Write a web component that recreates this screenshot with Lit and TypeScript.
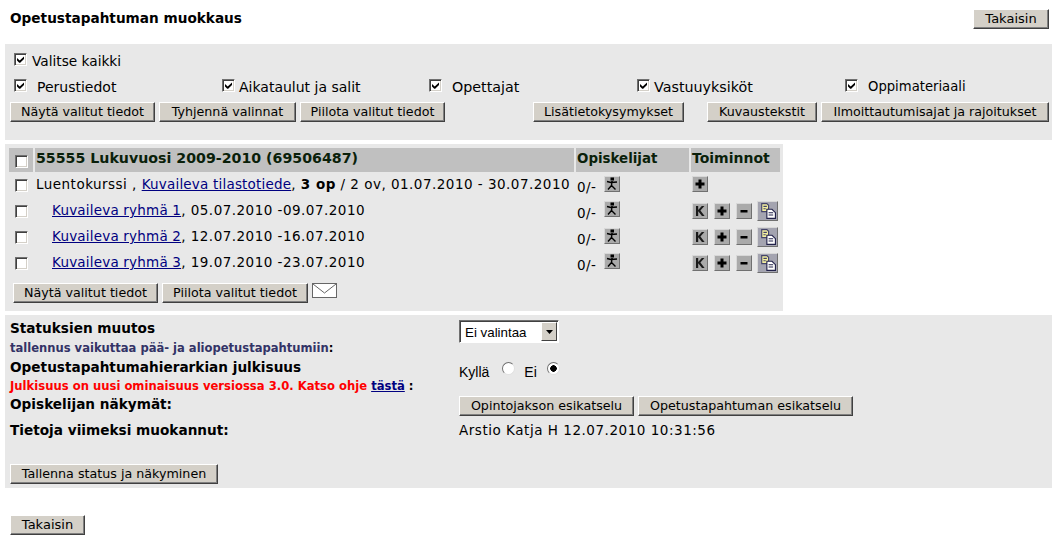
import { LitElement, html, css, svg } from "lit";
import { customElement } from "lit/decorators.js";

const cb = (checked = false) => html`<span class="cb" role="checkbox" aria-checked=${checked ? "true" : "false"}>${checked
  ? html`<svg width="9" height="9" viewBox="0 0 9 9"><path d="M1 3 L1 5.5 L3.2 7.8 L4.2 7.8 L8 4 L8 1.5 L3.7 5.6 Z" fill="#000"/></svg>`
  : ""}</span>`;

const iconBtn = (content: unknown, cls = "") => html`<span class="ib ${cls}"><svg width="14" height="14" viewBox="0 0 14 14">${content}</svg></span>`;
const plus = svg`<path d="M5.5 2.5h3v3h3v3h-3v3h-3v-3h-3v-3h3z" fill="#000"/>`;
const minus = svg`<rect x="3.5" y="6" width="7" height="2.5" fill="#000"/>`;
const k = svg`<path d="M3 2h2.2v4L8.8 2h2.6L7.4 6.6 11.6 12H9L5.2 7.2V12H3z" fill="#1a1a1a"/>`;
const runner = svg`<rect x="5.5" y="0.5" width="3.5" height="3" fill="#000"/><g fill="none" stroke="#000" stroke-width="1.4"><path d="M2 4.5 L6 5.5 L12 5 M7 4 L6.5 8.5 M6.5 8.5 L3 12.5 M6.5 8.5 L10.5 12.5"/></g>`;
const copy = svg`
  <path d="M1.5.5h4.5l1.5 1.5v5.5H1.5z" fill="#f4f0a0" stroke="#44446a" stroke-width="1"/>
  <path d="M3 3h3M3 5h2" stroke="#44446a" stroke-width="1"/>
  <path d="M6 5.5h4.5l3 3v5H6z" fill="#fff" stroke="#22224a" stroke-width="1"/>
  <path d="M7.5 8.5h4M7.5 10.5h4" stroke="#22224a" stroke-width="1"/>`;

@customElement("app-root")
export class AppRoot extends LitElement {
  static styles = css`
    :host { display: block; width: 1057px; height: 541px; overflow: hidden; background: #fff; font: 13.5px/16px "DejaVu Sans", Verdana, sans-serif; color: #000; position: relative; }
    * { box-sizing: border-box; }
    a { color: #000080; text-decoration: underline; }
    .btn { display: inline-flex; align-items: center; justify-content: center; height: 20px; padding: 0 0 1px; background: #d4d0c8; font: 12.7px/16px "DejaVu Sans", Verdana, sans-serif; color: #000; border: 1px solid; border-color: #fff #404040 #404040 #fff; box-shadow: inset -1px -1px 0 #808080; white-space: nowrap; }
    .btn.tk { font-size: 13px; }
    .cb { display: inline-flex; width: 13px; height: 13px; background: #fff; border: 1px solid; border-color: #707070 #fff #fff #707070; box-shadow: inset 1px 1px 0 #404040, inset -1px -1px 0 #d4d0c8; align-items: center; justify-content: center; flex: none; }
    .cb svg { display: block; }
    .top { display: flex; justify-content: space-between; padding: 9px 8px 0 10px; height: 44px; }
    .top .btn { width: 76px; }
    .title { font-weight: bold; font-size: 13.65px; margin-top: 1px; }
    .panel { background: #e8e8e8; margin: 0 5px; }
    .p1 { height: 96px; padding: 9px 3px 0 5px; }
    .all { display: flex; align-items: flex-start; gap: 5px; padding-left: 4px; height: 23px; }
    .all span.t { font-size: 13.7px; }
    .checks { display: grid; grid-template-columns: 208px 207px 208px 208px 1fr; padding-left: 4px; height: 26px; }
    .chk { display: flex; align-items: flex-start; }
    .chk .cb { margin-top: 3px; }
    .chk span.t { margin-top: 3px; font-size: 14px; }
    .chk span.m10 { margin-left: 10px; }
    .chk span.m4 { margin-left: 4px; }
    .chk span.wide { font-size: 14.3px; }
    .chk span.nar { font-size: 13.2px; }
    .bar { display: flex; gap: 4px; }
    .bar .w1 { width: 145px; } .bar .w2 { width: 137px; } .bar .w3 { width: 145px; }
    .bar .w4 { width: 151px; margin-left: 84px; } .bar .w5 { width: 110px; margin-left: 19px; } .bar .w6 { width: 228px; }
    .p2 { width: 778px; height: 167px; margin-top: 4px; padding: 4px 3px 0 4px; letter-spacing: 0.48px; }
    .p2 a { letter-spacing: 0.2px; }
    .grid { display: grid; grid-template-columns: 24px 539px 113px 89px; column-gap: 2px; width: 100%; }
    .row { display: contents; }
    .h { background: #c0c0c0; height: 24px; font-weight: bold; font-size: 14.2px; letter-spacing: 0; color: #0a1f0a; line-height: 20px; white-space: nowrap; padding-left: 1px; }
    .h.c { display: flex; padding: 7px 0 0 6px; }
    .h.op { font-size: 13.4px; line-height: 21px; }
    .h.to { font-size: 14px; }
    .c1 { height: 26px; padding: 7px 0 0 6px; }
    .c2 { height: 26px; padding: 4px 0 0 1px; white-space: nowrap; }
    .c2.sub { padding-left: 17px; }
    .c3 { height: 26px; display: flex; padding: 4px 0 0 1px; align-items: flex-start; }
    .c3.up { padding-top: 3px; }
    .c3 .n { margin-top: 3px; width: 27px; flex: none; }
    .c3.up .n { margin-top: 4px; }
    .c4 { height: 26px; display: flex; gap: 6px; padding: 4px 0 0 1px; align-items: flex-start; }
    .ib { width: 16px; height: 16px; background: #aaaaaa; border: 1px solid; border-color: #d8d8d8 #707070 #707070 #d8d8d8; display: inline-flex; align-items: center; justify-content: center; flex: none; }
    .ib.k { margin-top: 1px; }
    .ib.copy { width: 21px; height: 20px; margin-left: -1px; margin-top: -1px; background: #a4a4b0; }
    .ib.copy svg { width: 16px; height: 16px; }
    .foot { display: flex; gap: 4px; padding: 7px 0 0 4px; align-items: flex-start; letter-spacing: 0; }
    .foot .w1 { width: 145px; } .foot .w2 { width: 146px; }
    .mail { display: block; }
    .p3 { height: 173px; margin-top: 4px; padding: 5px 5px 0 5px; display: grid; grid-template-columns: 449px 1fr; grid-template-rows: 37px 37px 26px 34px 1fr; }
    .b { font-weight: bold; font-size: 13.65px; }
    .lft.two { padding-top: 2px; }
    .small { font-size: 11.55px; font-weight: bold; line-height: 14px; margin-top: 5px; white-space: nowrap; }
    .two .small { margin-top: 4px; font-size: 11.62px; }
    .navy { color: #333366; }
    .red { color: #f00; }
    .blk { color: #000; }
    .sel { display: flex; width: 100px; height: 23px; background: #fff; border: 1px solid; border-color: #707070 #fff #fff #707070; box-shadow: inset 1px 1px 0 #404040; font: 13.33px/19px "Liberation Sans", Arial, sans-serif; padding: 1px 1px 0 1px; }
    .sel .v { flex: 1; padding: 1px 0 0 4px; }
    .sel .a { width: 16px; height: 19px; background: #d4d0c8; border: 1px solid; border-color: #fff #404040 #404040 #fff; display: flex; align-items: center; justify-content: center; }
    .vis { display: flex; align-items: flex-start; font: 14px/16px "Liberation Sans", Arial, sans-serif; padding-top: 7px; }
    .rd { display: inline-block; width: 13px; height: 13px; border-radius: 50%; background: #fff; border: 1px solid; border-color: #707070 #e0e0e0 #e0e0e0 #707070; margin-top: -2px; flex: none; }
    .rd.on { background: radial-gradient(circle, #000 0 3px, #fff 3.5px); margin-left: 10px; }
    .vis .y { margin-left: 13px; margin-right: 9px; }
    .pv { display: flex; gap: 4px; padding-top: 2px; }
    .pv .w1 { width: 175px; } .pv .w2 { width: 215px; }
    .save { grid-column: 1 / 3; padding-top: 10px; }
    .save .btn { width: 208px; }
    .view { padding-top: 2px; }
    .who { padding-top: 2px; }
    .who.v { letter-spacing: 0.53px; }
    .back { padding: 27px 0 0 10px; }
    .back .btn { width: 75px; }
  `;

  private row(name: string, dates: string, up: boolean) {
    return html`<div class="row">
      <div class="c1">${cb()}</div>
      <div class="c2 sub"><a href="#">${name}</a>, ${dates}</div>
      <div class="c3 ${up ? "up" : ""}"><span class="n">0/-</span>${iconBtn(runner)}</div>
      <div class="c4">${iconBtn(k, "k")}${iconBtn(plus, "k")}${iconBtn(minus, "k")}${iconBtn(copy, "copy")}</div>
    </div>`;
  }

  render() {
    return html`
      <div class="top"><div class="title">Opetustapahtuman muokkaus</div><button class="btn tk">Takaisin</button></div>
      <div class="panel p1">
        <div class="all">${cb(true)}<span class="t">Valitse kaikki</span></div>
        <div class="checks">
          <div class="chk">${cb(true)}<span class="t m10">Perustiedot</span></div>
          <div class="chk">${cb(true)}<span class="t m4">Aikataulut ja salit</span></div>
          <div class="chk">${cb(true)}<span class="t m10 wide">Opettajat</span></div>
          <div class="chk">${cb(true)}<span class="t m4 wide">Vastuuyksiköt</span></div>
          <div class="chk">${cb(true)}<span class="t m10 nar">Oppimateriaali</span></div>
        </div>
        <div class="bar">
          <button class="btn w1">Näytä valitut tiedot</button>
          <button class="btn w2">Tyhjennä valinnat</button>
          <button class="btn w3">Piilota valitut tiedot</button>
          <button class="btn w4">Lisätietokysymykset</button>
          <button class="btn w5">Kuvaustekstit</button>
          <button class="btn w6">Ilmoittautumisajat ja rajoitukset</button>
        </div>
      </div>
      <div class="panel p2">
        <div class="grid">
          <div class="row">
            <div class="h c">${cb()}</div>
            <div class="h">55555 Lukuvuosi 2009-2010 (69506487)</div>
            <div class="h op">Opiskelijat</div>
            <div class="h to">Toiminnot</div>
          </div>
          <div class="row">
            <div class="c1">${cb()}</div>
            <div class="c2">Luentokurssi , <a href="#">Kuvaileva tilastotiede</a>, <b>3 op</b> / 2 ov, 01.07.2010 - 30.07.2010</div>
            <div class="c3"><span class="n">0/-</span>${iconBtn(runner)}</div>
            <div class="c4">${iconBtn(plus)}</div>
          </div>
          ${this.row("Kuvaileva ryhmä 1", "05.07.2010 -09.07.2010", true)}
          ${this.row("Kuvaileva ryhmä 2", "12.07.2010 -16.07.2010", false)}
          ${this.row("Kuvaileva ryhmä 3", "19.07.2010 -23.07.2010", true)}
        </div>
        <div class="foot">
          <button class="btn w1">Näytä valitut tiedot</button>
          <button class="btn w2">Piilota valitut tiedot</button>
          <svg class="mail" width="25" height="15" viewBox="0 0 25 15"><rect x="0.5" y="0.5" width="24" height="14" fill="#fff" stroke="#666"/><path d="M1 1l11.5 9L24 1" fill="none" stroke="#666"/></svg>
        </div>
      </div>
      <div class="panel p3">
        <div class="lft"><div class="b">Statuksien muutos</div><div class="small navy">tallennus vaikuttaa pää- ja aliopetustapahtumiin<span class="blk">:</span></div></div>
        <div><div class="sel"><span class="v">Ei valintaa</span><span class="a"><svg width="7" height="4" viewBox="0 0 7 4"><path d="M0 0h7L3.5 4z" fill="#000"/></svg></span></div></div>
        <div class="lft two"><div class="b">Opetustapahtumahierarkian julkisuus</div><div class="small red">Julkisuus on uusi ominaisuus versiossa 3.0. Katso ohje <a href="#">tästä</a> <span class="blk">:</span></div></div>
        <div class="vis"><span>Kyllä</span><span class="rd y"></span><span>Ei</span><span class="rd on"></span></div>
        <div class="b view">Opiskelijan näkymät:</div>
        <div class="pv"><button class="btn w1">Opintojakson esikatselu</button><button class="btn w2">Opetustapahtuman esikatselu</button></div>
        <div class="b who">Tietoja viimeksi muokannut:</div>
        <div class="who v">Arstio Katja H 12.07.2010 10:31:56</div>
        <div class="save"><button class="btn">Tallenna status ja näkyminen</button></div>
      </div>
      <div class="back"><button class="btn tk">Takaisin</button></div>
    `;
  }
}
